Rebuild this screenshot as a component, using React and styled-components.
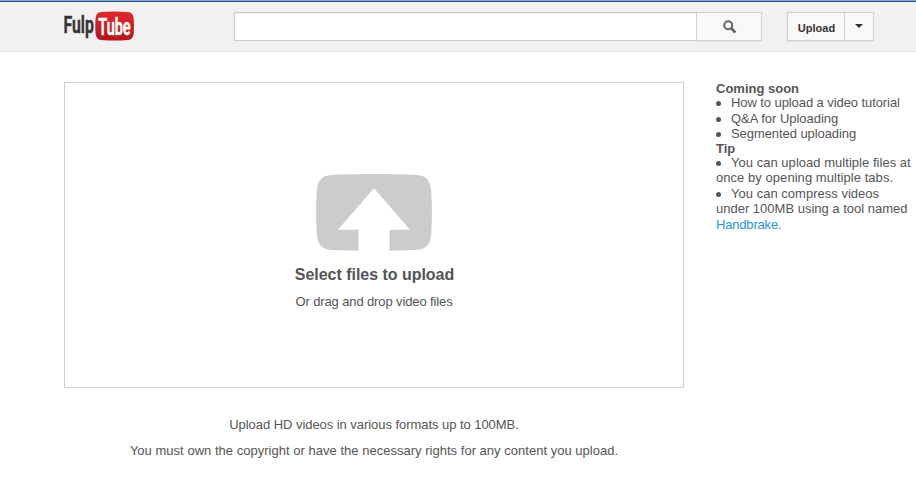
import React from "react";
import styled, { createGlobalStyle } from "styled-components";

const GlobalStyle = createGlobalStyle`
  * { box-sizing: border-box; }
  body {
    margin: 0;
    background: #fff;
    color: #555;
    font: 13px/15px "Liberation Sans", Arial, sans-serif;
    overflow: hidden;
  }
`;

const Page = styled.div`
  width: 916px;
  height: 486px;
`;

const Header = styled.header`
  display: flex;
  align-items: flex-start;
  height: 52px;
  padding: 9px 0 0 62px;
  background: #f1f1f1;
  border-top: 2px solid #2c5594;
  border-bottom: 1px solid #e6e6e6;
  border-image: linear-gradient(#83a5d3 0 1px, #2c5594 1px 2px, #e6e6e6 2px) 2 0 1 0;
`;

const Logo = styled.svg`
  display: block;
  width: 74px;
  height: 32px;
`;

const SearchForm = styled.form`
  display: flex;
  margin: 1px 0 0 98px;
`;

const SearchInput = styled.input`
  width: 462px;
  height: 29px;
  padding: 0 8px;
  border: 1px solid #ccc;
  border-right: 0;
  border-radius: 0;
  background: #fff;
  box-shadow: inset 0 1px 1px #eee;
  font: inherit;
  outline: none;
`;

const Button = styled.button`
  display: flex;
  align-items: center;
  justify-content: center;
  width: ${(p) => p.$width}px;
  height: 29px;
  padding: ${(p) => p.$pad || "0"};
  border: 1px solid #d0d0d0;
  background: #f8f8f8;
  box-shadow: 0 1px 0 #e8e8e8;
  color: #333;
  font: bold 11px "Liberation Sans", Arial, sans-serif;
  & + & { margin-left: -1px; }
`;

const UploadGroup = styled.div`
  display: flex;
  margin: 1px 0 0 25px;
`;

const Main = styled.main`
  display: flex;
  padding: 30px 0 0 64px;
`;

const Content = styled.section`
  width: 620px;
`;

const DropZone = styled.div`
  display: flex;
  flex-direction: column;
  align-items: center;
  height: 306px;
  padding-top: 91px;
  border: 1px solid #d0d0d0;
`;

const UploadIcon = styled.svg`
  display: block;
  width: 118px;
  height: 78px;
`;

const Title = styled.h1`
  margin: 13px 0 0;
  padding-left: 1px;
  font-size: 16px;
  line-height: 20px;
  letter-spacing: -0.03px;
`;

const Text = styled.p`
  margin: ${(p) => p.$top}px 0 0;
  text-align: center;
  white-space: nowrap;
  letter-spacing: ${(p) => p.$track || 0}px;
`;

const Sidebar = styled.aside`
  width: 200px;
  margin: -1px 0 0 32px;
`;

const Line = styled.div`
  display: flex;
  align-items: flex-start;
  height: ${(p) => p.$height || 15}px;
  white-space: nowrap;
  font-weight: ${(p) => (p.$bold ? "bold" : "normal")};
  letter-spacing: ${(p) => p.$track || 0}px;
`;

const Bullet = styled.span`
  width: 5px;
  height: 5px;
  margin: 6px 10px 0 0;
  border-radius: 50%;
  background: #555;
`;

const Link = styled.a`
  color: #2793e6;
  text-decoration: none;
`;

const soon = [
  { text: "How to upload a video tutorial", height: 16, track: -0.08 },
  { text: "Q&A for Uploading", height: 15, track: -0.03 },
  { text: "Segmented uploading", height: 15, track: -0.07 },
];

const tips = [
  { text: "You can upload multiple files at", height: 15, bullet: true, track: 0.03 },
  { text: "once by opening multiple tabs.", height: 16, track: 0.05 },
  { text: "You can compress videos", height: 15, bullet: true, track: 0.02 },
  { text: "under 100MB using a tool named", height: 16 },
];

export default function App() {
  return (
    <Page>
      <GlobalStyle />
      <Header>
        <Logo viewBox="62 11 74 32" role="img" aria-label="FulpTube">
          <defs>
            <linearGradient id="red" x1="0" y1="0" x2="0" y2="1">
              <stop offset="0" stopColor="#df2a2b" />
              <stop offset="1" stopColor="#b4161c" />
            </linearGradient>
          </defs>
          <path
            d="M101 12.1Q115 10.9 128 12.1Q133 12.6 133.6 18Q134.3 26 133.6 34Q133 39.6 128 40Q115 41.2 101 40Q96.2 39.6 95.6 34Q95 26 95.6 18Q96.2 12.6 101 12.1Z"
            fill="url(#red)"
          />
          <g fontFamily="Roboto, sans-serif" fontWeight="600" strokeWidth="0.55">
            <text transform="translate(63.5 33) scale(.64 1)" fontSize="23" textLength="47.5" lengthAdjust="spacingAndGlyphs" fill="#333" stroke="#333">Fulp</text>
            <text transform="translate(98.3 34.5) scale(.64 1)" fontSize="24.5" textLength="50.5" lengthAdjust="spacingAndGlyphs" fill="#fff" stroke="#fff">Tube</text>
          </g>
        </Logo>
        <SearchForm>
          <SearchInput aria-label="Search" />
          <Button type="button" $width={66} $pad="1px 0 0 2px" aria-label="Search">
            <svg width="14" height="14" viewBox="0 0 14 14" fill="none" stroke="#666">
              <circle cx="5.2" cy="5.2" r="4" strokeWidth="2.1" />
              <path d="M8.2 8.2L12.4 12.4" strokeWidth="2.8" />
            </svg>
          </Button>
        </SearchForm>
        <UploadGroup>
          <Button type="button" $width={58} $pad="3px 0 0 1px">Upload</Button>
          <Button type="button" $width={30} $pad="0 0 1px" aria-label="Upload options">
            <svg width="8" height="4" viewBox="0 0 8 4">
              <path d="M0 0H8L4 4Z" fill="#333" />
            </svg>
          </Button>
        </UploadGroup>
      </Header>
      <Main>
        <Content>
          <DropZone>
            <UploadIcon viewBox="315 174 118 78">
              <path
                d="M333 174.8Q374 173.4 415 174.8C426 175.4 430.1 179.5 431.2 191Q432.6 212 431.2 234C430.1 245.5 426 249.4 415 250.1L389.5 250.7V229.8H410L374 188.3L337.8 229.8H358.5V250.7L333 250.1C322 249.4 317.9 245.5 316.8 234Q315.4 212 316.8 191C317.9 179.5 322 175.4 333 174.8Z"
                fill="#ccc"
              />
            </UploadIcon>
            <Title>Select files to upload</Title>
            <Text $top={9} $track={-0.12}>Or drag and drop video files</Text>
          </DropZone>
          <Text $top={29} $track={-0.05}>Upload HD videos in various formats up to 100MB.</Text>
          <Text $top={11} $track={0.02}>You must own the copyright or have the necessary rights for any content you upload.</Text>
        </Content>
        <Sidebar>
          <Line $bold $height={14}>Coming soon</Line>
          {soon.map((item) => (
            <Line key={item.text} $height={item.height} $track={item.track}>
              <Bullet />
              {item.text}
            </Line>
          ))}
          <Line $bold $height={14}>Tip</Line>
          {tips.map((item) => (
            <Line key={item.text} $height={item.height} $track={item.track}>
              {item.bullet && <Bullet />}
              {item.text}
            </Line>
          ))}
          <Line $track={-0.18}>
            <Link>Handbrake.</Link>
          </Line>
        </Sidebar>
      </Main>
    </Page>
  );
}
